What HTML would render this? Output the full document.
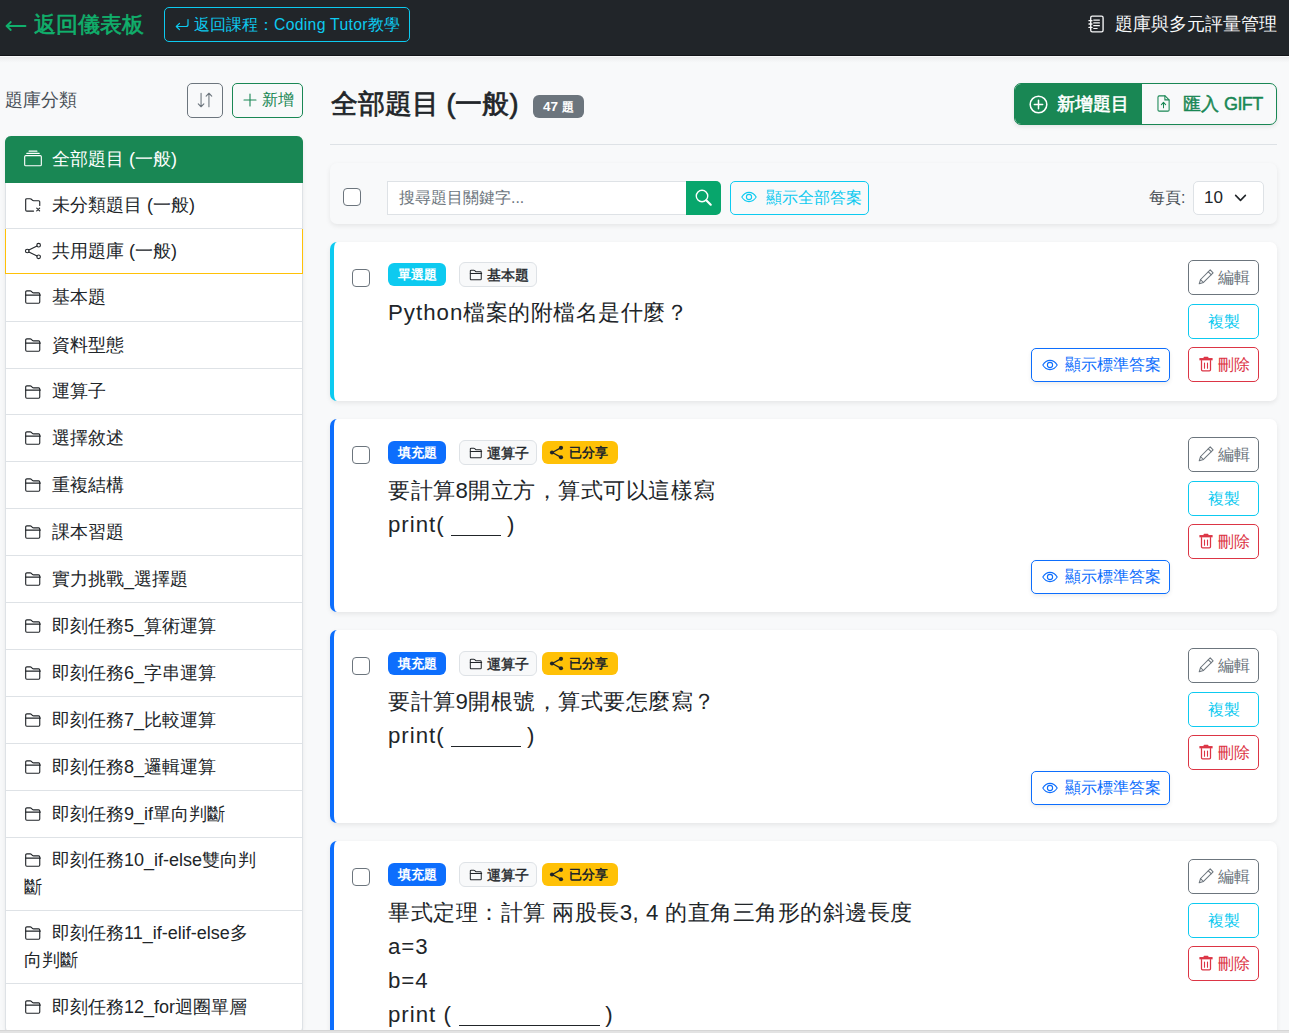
<!DOCTYPE html>
<html><head><meta charset="utf-8">
<style>
*{box-sizing:border-box}
html,body{margin:0;padding:0}
body{width:1289px;height:1033px;overflow:hidden;background:#f8f9fa;font-family:"Liberation Sans",sans-serif;color:#212529;position:relative}
svg{display:block}
.nav{position:absolute;left:0;top:0;width:1289px;height:56px;background:#212529;border-bottom:1px solid #121418}
.navshadow{position:absolute;left:0;top:57px;width:1289px;height:6px;background:linear-gradient(#ebebec,#eff0f1 30%,#f5f6f7 70%,#f8f9fa)}
.brand{position:absolute;left:34px;top:8px;font-size:21.6px;line-height:34px;font-weight:400;-webkit-text-stroke:.6px #10b06c;color:#10b06c;white-space:nowrap}
.arrow{position:absolute;left:5px;top:15px}
.backbtn{position:absolute;left:164px;top:7px;width:246px;height:35px;border:1px solid #0dcaf0;border-radius:5px;color:#0dcaf0;font-size:15.75px;line-height:33px;white-space:nowrap}
.backbtn>span{position:absolute;left:29px;top:0}
.backbtn svg{position:absolute;left:9px;top:9px}
.navtitle{position:absolute;left:1115px;top:11px;font-size:18px;line-height:27px;color:#f8f9fa;white-space:nowrap}
.journal{position:absolute;left:1087px;top:15px}
.sbhead{position:absolute;left:5px;top:87px;font-size:18px;line-height:27px;color:#495057}
.btn{position:absolute;border:1px solid;border-radius:5px;white-space:nowrap}
.lg{position:absolute;left:5px;top:136px;width:298px;background:#fff;border-radius:6px;box-shadow:0 2px 4px rgba(0,0,0,.075)}
.li{position:relative;height:47px;border:1px solid #dee2e6;border-top:0;font-size:18px;line-height:27px;padding:9px 0 0 18px;color:#212529;white-space:nowrap}
.li span{display:block;text-indent:28px}
.li.active{background:#198754;border-color:#198754;color:#fff;border-radius:6px 6px 0 0}
.li.share{border-color:#ffc107}
.li.pre{border-bottom-color:#dee2e6}
.title{position:absolute;left:331px;top:84px;font-size:27px;line-height:40px;font-weight:400;-webkit-text-stroke:.7px #212529;color:#212529;white-space:nowrap}
.badge{position:absolute;border-radius:6px;font-weight:bold;text-align:center;white-space:nowrap}
.hr{position:absolute;left:330px;top:144px;width:947px;height:1px;background:#dee2e6}
.btngrp{position:absolute;left:1014px;top:83px;width:263px;height:42px;border:1px solid #198754;border-radius:7px;overflow:hidden;box-shadow:0 2px 4px rgba(0,0,0,.08);background:#f8f9fa}
.bg1{position:absolute;left:0;top:0;width:127px;height:40px;background:#198754;color:#fff;font-size:18px;font-weight:400;-webkit-text-stroke:.6px #fff;line-height:40px}
.bg2{position:absolute;left:127px;top:0;width:135px;height:40px;color:#198754;font-size:18px;font-weight:400;-webkit-text-stroke:.45px #198754;line-height:40px}
.filter{position:absolute;left:330px;top:163px;width:947px;height:61px;background:#f8f9fa;border-radius:7px;box-shadow:0 2px 5px rgba(0,0,0,.08)}
.chk{position:absolute;width:18px;height:18px;border:1px solid #6c757d;border-radius:4px;background:#fff}
.search{position:absolute;left:57px;top:18px;width:300px;height:34px;background:#fff;border:1px solid #dee2e6;border-radius:0;font-size:15.75px;line-height:32px;color:#6c757d;padding-left:11px;white-space:nowrap}
.sbtn2{position:absolute;left:356px;top:18px;width:35px;height:34px;background:#08a66c;border-radius:0 5px 5px 0}
.sbtn2 svg{position:absolute;left:9px;top:8px}
.showall{position:absolute;left:400px;top:18px;width:139px;height:34px;border:1px solid #0dcaf0;border-radius:5px;color:#0dcaf0;font-size:15.75px;line-height:32px;white-space:nowrap}
.showall svg{position:absolute;left:10px;top:7px}
.showall span{position:absolute;left:35px}
.perpage{position:absolute;left:819px;top:21px;font-size:15.75px;line-height:27px;color:#495057;white-space:nowrap}
.select{position:absolute;left:863px;top:18px;width:71px;height:34px;background:#fff;border:1px solid #dee2e6;border-radius:5px;font-size:17px;line-height:32px;padding-left:10px;color:#212529}
.select svg{position:absolute;left:39px;top:8px}
.card{position:absolute;left:330px;width:947px;background:#fff;border-radius:7px;box-shadow:0 2px 5px rgba(0,0,0,.08);border-left:4px solid #0d6efd}
.qtext{position:absolute;left:54px;letter-spacing:.5px;font-size:22.25px;line-height:34px;color:#212529;white-space:nowrap}
.tag{position:absolute;height:23px;border-radius:6px;font-size:13px;font-weight:bold;line-height:23px;white-space:nowrap}
.tag.cat{background:#f8f9fa;border:1px solid #dee2e6;color:#212529}
.sbtn{position:absolute;left:854px;width:71px;height:35px;border:1px solid;border-radius:5px;font-size:15.75px;line-height:33px;white-space:nowrap;background:#fff}
.ansbtn{position:absolute;left:697px;width:139px;height:34px;border:1px solid #0d6efd;border-radius:5px;color:#0d6efd;font-size:15.75px;line-height:32px;white-space:nowrap;box-shadow:0 2px 4px rgba(0,0,0,.075);background:#fff}
.lat{letter-spacing:1px}
.us{display:inline-block;height:1px;background:#212529;vertical-align:-4px;margin:0 -1px 0 0}
.bottomstrip{position:absolute;left:0;top:1030px;width:1289px;height:3px;background:#e3e3e3;border-top:1px solid #d6d6d6}
</style></head>
<body>
<div class="nav">
  <div class="arrow"><svg width="22" height="22" viewBox="0 0 22 16" style="" fill="none" stroke="#10b06c" stroke-width="1.8" stroke-linecap="round" stroke-linejoin="round"><path d="M1.5 8h19M5.8 4l-4.2 4 4.2 4"/></svg></div>
  <div class="brand">返回儀表板</div>
  <div class="backbtn"><svg width="16" height="16" viewBox="0 0 16 16" style="" fill="none" stroke="#0dcaf0" stroke-width="1.2" stroke-linecap="round" stroke-linejoin="round"><path d="M14 2.5v5a2 2 0 0 1-2 2H2.5"/><path d="M5.5 6.3l-3.2 3.2 3.2 3.2"/></svg><span>返回課程：<span style="letter-spacing:.3px">Coding Tutor</span>教學</span></div>
  <div class="journal"><svg width="18" height="18" viewBox="0 0 16 16" style="" fill="none" stroke="#f8f9fa" stroke-width="1.2" stroke-linecap="round" stroke-linejoin="round"><rect x="3.3" y="1" width="11" height="14" rx="1.4"/><path d="M6 4.5h5M6 7h5M6 9.5h5M6 12h3" stroke-width="1.1"/><path d="M1.8 5h2.6M1.8 8h2.6M1.8 11h2.6" stroke-width="1.3"/></svg></div>
  <div class="navtitle">題庫與多元評量管理</div>
</div>

<div class="navshadow"></div>
<div class="sbhead">題庫分類</div>
<div class="btn" style="left:187px;top:83px;width:36px;height:35px;border-color:#6c757d"><div style="position:absolute;left:8px;top:7px"><svg width="18" height="18" viewBox="0 0 16 16" style="" fill="none" stroke="#6c757d" stroke-width="0.95" stroke-linecap="round" stroke-linejoin="round"><path d="M4.5 2v12M2 11.5l2.5 2.5 2.5-2.5M11.5 14v-12M9 4.5l2.5-2.5 2.5 2.5"/></svg></div></div>
<div class="btn" style="left:232px;top:83px;width:71px;height:35px;border-color:#198754;color:#198754;font-size:15.75px;line-height:33px"><div style="position:absolute;left:9px;top:7.5px"><svg width="16" height="16" viewBox="0 0 16 16" style="" fill="none" stroke="#198754" stroke-width="1.1" stroke-linecap="round" stroke-linejoin="round"><path d="M8 2v12M2 8h12"/></svg></div><span style="position:absolute;left:29px;top:-1px">新增</span></div>

<div class="lg"><div class="li active" style="height:47px;padding-top:9.5px"><svg width="18" height="18" viewBox="0 0 16 16" style="position:absolute;left:18px;top:14px" fill="none" stroke="#fff" stroke-width="1.0" stroke-linecap="round" stroke-linejoin="round"><rect x="0.6" y="5" width="14.8" height="9" rx="1"/><path d="M2.5 3h11M4.5 1h7"/></svg><span>全部題目 (一般)</span></div><div class="li " style="height:46px;padding-top:9.0px"><svg width="18" height="18" viewBox="0 0 16 16" style="position:absolute;left:18px;top:14px" fill="none" stroke="#212529" stroke-width="1.0" stroke-linecap="round" stroke-linejoin="round"><path d="M8.5 12.5h-6a1 1 0 0 1-1-1V2.5a1 1 0 0 1 1-1h2.9c.5 0 .9.2 1.2.5l.8.8c.3.3.7.5 1.1.5h4.5a1 1 0 0 1 1 1v3.2"/><path d="M11.3 9.8l2.6 2.6M13.9 9.8l-2.6 2.6"/></svg><span>未分類題目 (一般)</span></div><div class="li share" style="height:45px;padding-top:8.5px"><svg width="18" height="18" viewBox="0 0 16 16" style="position:absolute;left:18px;top:13px" fill="none" stroke="#212529" stroke-width="1.0" stroke-linecap="round" stroke-linejoin="round"><circle cx="13" cy="2.8" r="1.6"/><circle cx="13" cy="13.2" r="1.6"/><circle cx="2.9" cy="8" r="1.6"/><path d="M4.3 7.2l7.3-3.6M4.3 8.8l7.3 3.6"/></svg><span>共用題庫 (一般)</span></div><div class="li " style="height:48px;padding-top:10.0px"><svg width="18" height="18" viewBox="0 0 16 16" style="position:absolute;left:18px;top:14px" fill="none" stroke="#212529" stroke-width="1.0" stroke-linecap="round" stroke-linejoin="round"><path d="M1.5 12.5V3.5a1 1 0 0 1 1-1h2.9c.5 0 .9.2 1.2.5l.8.8c.3.3.7.5 1.1.5h4.5a1 1 0 0 1 1 1v7.2a1 1 0 0 1-1 1h-10.5a1 1 0 0 1-1-1z"/><path d="M1.5 6.3h13"/></svg><span>基本題</span></div><div class="li " style="height:47px;padding-top:9.5px"><svg width="18" height="18" viewBox="0 0 16 16" style="position:absolute;left:18px;top:14px" fill="none" stroke="#212529" stroke-width="1.0" stroke-linecap="round" stroke-linejoin="round"><path d="M1.5 12.5V3.5a1 1 0 0 1 1-1h2.9c.5 0 .9.2 1.2.5l.8.8c.3.3.7.5 1.1.5h4.5a1 1 0 0 1 1 1v7.2a1 1 0 0 1-1 1h-10.5a1 1 0 0 1-1-1z"/><path d="M1.5 6.3h13"/></svg><span>資料型態</span></div><div class="li " style="height:46px;padding-top:9.0px"><svg width="18" height="18" viewBox="0 0 16 16" style="position:absolute;left:18px;top:14px" fill="none" stroke="#212529" stroke-width="1.0" stroke-linecap="round" stroke-linejoin="round"><path d="M1.5 12.5V3.5a1 1 0 0 1 1-1h2.9c.5 0 .9.2 1.2.5l.8.8c.3.3.7.5 1.1.5h4.5a1 1 0 0 1 1 1v7.2a1 1 0 0 1-1 1h-10.5a1 1 0 0 1-1-1z"/><path d="M1.5 6.3h13"/></svg><span>運算子</span></div><div class="li " style="height:47px;padding-top:9.5px"><svg width="18" height="18" viewBox="0 0 16 16" style="position:absolute;left:18px;top:14px" fill="none" stroke="#212529" stroke-width="1.0" stroke-linecap="round" stroke-linejoin="round"><path d="M1.5 12.5V3.5a1 1 0 0 1 1-1h2.9c.5 0 .9.2 1.2.5l.8.8c.3.3.7.5 1.1.5h4.5a1 1 0 0 1 1 1v7.2a1 1 0 0 1-1 1h-10.5a1 1 0 0 1-1-1z"/><path d="M1.5 6.3h13"/></svg><span>選擇敘述</span></div><div class="li " style="height:47px;padding-top:9.5px"><svg width="18" height="18" viewBox="0 0 16 16" style="position:absolute;left:18px;top:14px" fill="none" stroke="#212529" stroke-width="1.0" stroke-linecap="round" stroke-linejoin="round"><path d="M1.5 12.5V3.5a1 1 0 0 1 1-1h2.9c.5 0 .9.2 1.2.5l.8.8c.3.3.7.5 1.1.5h4.5a1 1 0 0 1 1 1v7.2a1 1 0 0 1-1 1h-10.5a1 1 0 0 1-1-1z"/><path d="M1.5 6.3h13"/></svg><span>重複結構</span></div><div class="li " style="height:47px;padding-top:9.5px"><svg width="18" height="18" viewBox="0 0 16 16" style="position:absolute;left:18px;top:14px" fill="none" stroke="#212529" stroke-width="1.0" stroke-linecap="round" stroke-linejoin="round"><path d="M1.5 12.5V3.5a1 1 0 0 1 1-1h2.9c.5 0 .9.2 1.2.5l.8.8c.3.3.7.5 1.1.5h4.5a1 1 0 0 1 1 1v7.2a1 1 0 0 1-1 1h-10.5a1 1 0 0 1-1-1z"/><path d="M1.5 6.3h13"/></svg><span>課本習題</span></div><div class="li " style="height:47px;padding-top:9.5px"><svg width="18" height="18" viewBox="0 0 16 16" style="position:absolute;left:18px;top:14px" fill="none" stroke="#212529" stroke-width="1.0" stroke-linecap="round" stroke-linejoin="round"><path d="M1.5 12.5V3.5a1 1 0 0 1 1-1h2.9c.5 0 .9.2 1.2.5l.8.8c.3.3.7.5 1.1.5h4.5a1 1 0 0 1 1 1v7.2a1 1 0 0 1-1 1h-10.5a1 1 0 0 1-1-1z"/><path d="M1.5 6.3h13"/></svg><span>實力挑戰_選擇題</span></div><div class="li " style="height:47px;padding-top:9.5px"><svg width="18" height="18" viewBox="0 0 16 16" style="position:absolute;left:18px;top:14px" fill="none" stroke="#212529" stroke-width="1.0" stroke-linecap="round" stroke-linejoin="round"><path d="M1.5 12.5V3.5a1 1 0 0 1 1-1h2.9c.5 0 .9.2 1.2.5l.8.8c.3.3.7.5 1.1.5h4.5a1 1 0 0 1 1 1v7.2a1 1 0 0 1-1 1h-10.5a1 1 0 0 1-1-1z"/><path d="M1.5 6.3h13"/></svg><span>即刻任務5_算術運算</span></div><div class="li " style="height:47px;padding-top:9.5px"><svg width="18" height="18" viewBox="0 0 16 16" style="position:absolute;left:18px;top:14px" fill="none" stroke="#212529" stroke-width="1.0" stroke-linecap="round" stroke-linejoin="round"><path d="M1.5 12.5V3.5a1 1 0 0 1 1-1h2.9c.5 0 .9.2 1.2.5l.8.8c.3.3.7.5 1.1.5h4.5a1 1 0 0 1 1 1v7.2a1 1 0 0 1-1 1h-10.5a1 1 0 0 1-1-1z"/><path d="M1.5 6.3h13"/></svg><span>即刻任務6_字串運算</span></div><div class="li " style="height:47px;padding-top:9.5px"><svg width="18" height="18" viewBox="0 0 16 16" style="position:absolute;left:18px;top:14px" fill="none" stroke="#212529" stroke-width="1.0" stroke-linecap="round" stroke-linejoin="round"><path d="M1.5 12.5V3.5a1 1 0 0 1 1-1h2.9c.5 0 .9.2 1.2.5l.8.8c.3.3.7.5 1.1.5h4.5a1 1 0 0 1 1 1v7.2a1 1 0 0 1-1 1h-10.5a1 1 0 0 1-1-1z"/><path d="M1.5 6.3h13"/></svg><span>即刻任務7_比較運算</span></div><div class="li " style="height:47px;padding-top:9.5px"><svg width="18" height="18" viewBox="0 0 16 16" style="position:absolute;left:18px;top:14px" fill="none" stroke="#212529" stroke-width="1.0" stroke-linecap="round" stroke-linejoin="round"><path d="M1.5 12.5V3.5a1 1 0 0 1 1-1h2.9c.5 0 .9.2 1.2.5l.8.8c.3.3.7.5 1.1.5h4.5a1 1 0 0 1 1 1v7.2a1 1 0 0 1-1 1h-10.5a1 1 0 0 1-1-1z"/><path d="M1.5 6.3h13"/></svg><span>即刻任務8_邏輯運算</span></div><div class="li " style="height:47px;padding-top:9.5px"><svg width="18" height="18" viewBox="0 0 16 16" style="position:absolute;left:18px;top:14px" fill="none" stroke="#212529" stroke-width="1.0" stroke-linecap="round" stroke-linejoin="round"><path d="M1.5 12.5V3.5a1 1 0 0 1 1-1h2.9c.5 0 .9.2 1.2.5l.8.8c.3.3.7.5 1.1.5h4.5a1 1 0 0 1 1 1v7.2a1 1 0 0 1-1 1h-10.5a1 1 0 0 1-1-1z"/><path d="M1.5 6.3h13"/></svg><span>即刻任務9_if單向判斷</span></div><div class="li " style="height:73px;padding-top:9px"><svg width="18" height="18" viewBox="0 0 16 16" style="position:absolute;left:18px;top:13px" fill="none" stroke="#212529" stroke-width="1.0" stroke-linecap="round" stroke-linejoin="round"><path d="M1.5 12.5V3.5a1 1 0 0 1 1-1h2.9c.5 0 .9.2 1.2.5l.8.8c.3.3.7.5 1.1.5h4.5a1 1 0 0 1 1 1v7.2a1 1 0 0 1-1 1h-10.5a1 1 0 0 1-1-1z"/><path d="M1.5 6.3h13"/></svg><span>即刻任務10_if-else雙向判<br>斷</span></div><div class="li " style="height:73px;padding-top:9px"><svg width="18" height="18" viewBox="0 0 16 16" style="position:absolute;left:18px;top:13px" fill="none" stroke="#212529" stroke-width="1.0" stroke-linecap="round" stroke-linejoin="round"><path d="M1.5 12.5V3.5a1 1 0 0 1 1-1h2.9c.5 0 .9.2 1.2.5l.8.8c.3.3.7.5 1.1.5h4.5a1 1 0 0 1 1 1v7.2a1 1 0 0 1-1 1h-10.5a1 1 0 0 1-1-1z"/><path d="M1.5 6.3h13"/></svg><span>即刻任務11_if-elif-else多<br>向判斷</span></div><div class="li " style="height:47px;padding-top:9.5px"><svg width="18" height="18" viewBox="0 0 16 16" style="position:absolute;left:18px;top:14px" fill="none" stroke="#212529" stroke-width="1.0" stroke-linecap="round" stroke-linejoin="round"><path d="M1.5 12.5V3.5a1 1 0 0 1 1-1h2.9c.5 0 .9.2 1.2.5l.8.8c.3.3.7.5 1.1.5h4.5a1 1 0 0 1 1 1v7.2a1 1 0 0 1-1 1h-10.5a1 1 0 0 1-1-1z"/><path d="M1.5 6.3h13"/></svg><span>即刻任務12_for迴圈單層</span></div></div>

<div class="title">全部題目 (一般)</div>
<div class="badge" style="left:533px;top:95px;width:51px;height:23px;background:#6c757d;color:#fff;font-size:13.5px;line-height:24px">47 <span style="font-size:12px">題</span></div>
<div class="hr"></div>

<div class="btngrp">
  <div class="bg1"><div style="position:absolute;left:14px;top:11px"><svg width="19" height="19" viewBox="0 0 16 16" style="" fill="none" stroke="#fff" stroke-width="1.3" stroke-linecap="round" stroke-linejoin="round"><circle cx="8" cy="8" r="7"/><path d="M8 4.5v7M4.5 8h7"/></svg></div><span style="position:absolute;left:42px">新增題目</span></div>
  <div class="bg2"><div style="position:absolute;left:13px;top:11px"><svg width="17" height="17" viewBox="0 0 16 16" style="" fill="none" stroke="#198754" stroke-width="1" stroke-linecap="round" stroke-linejoin="round"><path d="M4 0.8h5.5l3.8 3.8V14a1.2 1.2 0 0 1-1.2 1.2H4A1.2 1.2 0 0 1 2.8 14V2A1.2 1.2 0 0 1 4 .8z"/><path d="M9.3 .8v3.8h3.8" /><path d="M8 12V7.2M6 9l2-2 2 2"/></svg></div><span style="position:absolute;left:41px">匯入 <span style="letter-spacing:-.6px">GIFT</span></span></div>
</div>

<div class="filter">
  <div class="chk" style="left:13px;top:25px"></div>
  <div class="search">搜尋題目關鍵字...</div>
  <div class="sbtn2"><svg width="17" height="17" viewBox="0 0 16 16" style="" fill="none" stroke="#fff" stroke-width="1.3" stroke-linecap="round" stroke-linejoin="round"><circle cx="6.6" cy="6.6" r="5.4"/><path d="M10.6 10.6l4.2 4.2" stroke-width="2"/></svg></div>
  <div class="showall"><svg width="16" height="16" viewBox="0 0 16 16" style="" fill="none" stroke="#0dcaf0" stroke-width="1.1" stroke-linecap="round" stroke-linejoin="round"><path d="M0.8 8c1.8-2.9 4.3-4.6 7.2-4.6s5.4 1.7 7.2 4.6c-1.8 2.9-4.3 4.6-7.2 4.6S2.6 10.9.8 8z"/><circle cx="8" cy="8" r="2.6"/></svg><span>顯示全部答案</span></div>
  <div class="perpage">每頁:</div>
  <div class="select">10<svg width="15" height="15" viewBox="0 0 16 16" style="" fill="none" stroke="#212529" stroke-width="1.7" stroke-linecap="round" stroke-linejoin="round"><path d="M2.8 5.8l5.2 5.2 5.2-5.2"/></svg></div>
</div>

<div class="card" style="top:242px;height:159px;border-left-color:#0dcaf0"><div class="chk" style="left:18px;top:27px"></div><div class="tag" style="left:54px;top:21px;width:58px;background:#0dcaf0;color:#fff;text-align:center">單選題</div><div class="tag cat" style="left:125px;top:20px;width:78px;height:25px;line-height:23px"><svg width="14" height="14" viewBox="0 0 16 16" style="position:absolute;left:9px;top:4.5px" fill="none" stroke="#212529" stroke-width="1.15" stroke-linecap="round" stroke-linejoin="round"><path d="M1.5 12.5V3.5a1 1 0 0 1 1-1h2.9c.5 0 .9.2 1.2.5l.8.8c.3.3.7.5 1.1.5h4.5a1 1 0 0 1 1 1v7.2a1 1 0 0 1-1 1h-10.5a1 1 0 0 1-1-1z"/><path d="M1.5 6.3h13"/></svg><span style="position:absolute;left:27px;top:1px;font-weight:400;-webkit-text-stroke:.4px #212529;font-size:13.5px">基本題</span></div><div class="qtext" style="top:54px"><span class="lat">Python</span>檔案的附檔名是什麼？</div><div class="ansbtn" style="top:106px"><svg width="16" height="16" viewBox="0 0 16 16" style="position:absolute;left:10px;top:8px" fill="none" stroke="#0d6efd" stroke-width="1.1" stroke-linecap="round" stroke-linejoin="round"><path d="M0.8 8c1.8-2.9 4.3-4.6 7.2-4.6s5.4 1.7 7.2 4.6c-1.8 2.9-4.3 4.6-7.2 4.6S2.6 10.9.8 8z"/><circle cx="8" cy="8" r="2.6"/></svg><span style="position:absolute;left:33px">顯示標準答案</span></div><div class="sbtn" style="top:18px;border-color:#6c757d;color:#6c757d"><svg width="16" height="16" viewBox="0 0 16 16" style="position:absolute;left:9px;top:8px" fill="none" stroke="#6c757d" stroke-width="1.05" stroke-linecap="round" stroke-linejoin="round"><path d="M12.2 0.9l2.9 2.9-9.6 9.6-4.3 1.4 1.4-4.3z"/><path d="M10.3 2.8l2.9 2.9M2.5 10.6l2.9 2.9"/></svg><span style="position:absolute;left:29px">編輯</span></div><div class="sbtn" style="top:62px;border-color:#0dcaf0;color:#0dcaf0;text-align:center">複製</div><div class="sbtn" style="top:105px;border-color:#dc3545;color:#dc3545"><svg width="16" height="16" viewBox="0 0 16 16" style="position:absolute;left:9px;top:7.5px" fill="none" stroke="#dc3545" stroke-width="1" stroke-linecap="round" stroke-linejoin="round"><path d="M1.4 3.2h13.2" stroke-width="2.3" stroke-linecap="butt"/><path d="M6.3 1.6h3.4" stroke-width="1.6"/><path d="M3.5 4.6v9.2c0 .6.5 1.1 1.1 1.1h6.8c.6 0 1.1-.5 1.1-1.1V4.6" stroke-width="1.25"/><path d="M6.5 7v5.3M9.5 7v5.3" stroke-width="1.1"/></svg><span style="position:absolute;left:29px">刪除</span></div></div><div class="card" style="top:419px;height:193px;border-left-color:#0d6efd"><div class="chk" style="left:18px;top:27px"></div><div class="tag" style="left:54px;top:22px;width:58px;background:#0d6efd;color:#fff;text-align:center">填充題</div><div class="tag cat" style="left:125px;top:21px;width:78px;height:25px;line-height:23px"><svg width="14" height="14" viewBox="0 0 16 16" style="position:absolute;left:9px;top:4.5px" fill="none" stroke="#212529" stroke-width="1.15" stroke-linecap="round" stroke-linejoin="round"><path d="M1.5 12.5V3.5a1 1 0 0 1 1-1h2.9c.5 0 .9.2 1.2.5l.8.8c.3.3.7.5 1.1.5h4.5a1 1 0 0 1 1 1v7.2a1 1 0 0 1-1 1h-10.5a1 1 0 0 1-1-1z"/><path d="M1.5 6.3h13"/></svg><span style="position:absolute;left:27px;top:1px;font-weight:400;-webkit-text-stroke:.4px #212529;font-size:13.5px">運算子</span></div><div class="tag" style="left:208px;top:22px;width:76px;background:#ffc107;color:#212529"><svg width="15" height="15" viewBox="0 0 16 16" style="position:absolute;left:7px;top:4px" fill="none" stroke="#212529" stroke-width="1" stroke-linecap="round" stroke-linejoin="round"><circle cx="12.8" cy="3" r="2.2" fill="#212529" stroke="none"/><circle cx="12.8" cy="13" r="2.2" fill="#212529" stroke="none"/><circle cx="3.2" cy="8" r="2.2" fill="#212529" stroke="none"/><path d="M3.5 8l9-5M3.5 8l9 5" stroke-width="1.4"/></svg><span style="position:absolute;left:27px">已分享</span></div><div class="qtext" style="top:55px">要計算8開立方，算式可以這樣寫</div><div class="qtext" style="top:89px"><span class="lat">print(</span> <span class="us" style="width:50px"></span> )</div><div class="ansbtn" style="top:141px"><svg width="16" height="16" viewBox="0 0 16 16" style="position:absolute;left:10px;top:8px" fill="none" stroke="#0d6efd" stroke-width="1.1" stroke-linecap="round" stroke-linejoin="round"><path d="M0.8 8c1.8-2.9 4.3-4.6 7.2-4.6s5.4 1.7 7.2 4.6c-1.8 2.9-4.3 4.6-7.2 4.6S2.6 10.9.8 8z"/><circle cx="8" cy="8" r="2.6"/></svg><span style="position:absolute;left:33px">顯示標準答案</span></div><div class="sbtn" style="top:18px;border-color:#6c757d;color:#6c757d"><svg width="16" height="16" viewBox="0 0 16 16" style="position:absolute;left:9px;top:8px" fill="none" stroke="#6c757d" stroke-width="1.05" stroke-linecap="round" stroke-linejoin="round"><path d="M12.2 0.9l2.9 2.9-9.6 9.6-4.3 1.4 1.4-4.3z"/><path d="M10.3 2.8l2.9 2.9M2.5 10.6l2.9 2.9"/></svg><span style="position:absolute;left:29px">編輯</span></div><div class="sbtn" style="top:62px;border-color:#0dcaf0;color:#0dcaf0;text-align:center">複製</div><div class="sbtn" style="top:105px;border-color:#dc3545;color:#dc3545"><svg width="16" height="16" viewBox="0 0 16 16" style="position:absolute;left:9px;top:7.5px" fill="none" stroke="#dc3545" stroke-width="1" stroke-linecap="round" stroke-linejoin="round"><path d="M1.4 3.2h13.2" stroke-width="2.3" stroke-linecap="butt"/><path d="M6.3 1.6h3.4" stroke-width="1.6"/><path d="M3.5 4.6v9.2c0 .6.5 1.1 1.1 1.1h6.8c.6 0 1.1-.5 1.1-1.1V4.6" stroke-width="1.25"/><path d="M6.5 7v5.3M9.5 7v5.3" stroke-width="1.1"/></svg><span style="position:absolute;left:29px">刪除</span></div></div><div class="card" style="top:630px;height:193px;border-left-color:#0d6efd"><div class="chk" style="left:18px;top:27px"></div><div class="tag" style="left:54px;top:22px;width:58px;background:#0d6efd;color:#fff;text-align:center">填充題</div><div class="tag cat" style="left:125px;top:21px;width:78px;height:25px;line-height:23px"><svg width="14" height="14" viewBox="0 0 16 16" style="position:absolute;left:9px;top:4.5px" fill="none" stroke="#212529" stroke-width="1.15" stroke-linecap="round" stroke-linejoin="round"><path d="M1.5 12.5V3.5a1 1 0 0 1 1-1h2.9c.5 0 .9.2 1.2.5l.8.8c.3.3.7.5 1.1.5h4.5a1 1 0 0 1 1 1v7.2a1 1 0 0 1-1 1h-10.5a1 1 0 0 1-1-1z"/><path d="M1.5 6.3h13"/></svg><span style="position:absolute;left:27px;top:1px;font-weight:400;-webkit-text-stroke:.4px #212529;font-size:13.5px">運算子</span></div><div class="tag" style="left:208px;top:22px;width:76px;background:#ffc107;color:#212529"><svg width="15" height="15" viewBox="0 0 16 16" style="position:absolute;left:7px;top:4px" fill="none" stroke="#212529" stroke-width="1" stroke-linecap="round" stroke-linejoin="round"><circle cx="12.8" cy="3" r="2.2" fill="#212529" stroke="none"/><circle cx="12.8" cy="13" r="2.2" fill="#212529" stroke="none"/><circle cx="3.2" cy="8" r="2.2" fill="#212529" stroke="none"/><path d="M3.5 8l9-5M3.5 8l9 5" stroke-width="1.4"/></svg><span style="position:absolute;left:27px">已分享</span></div><div class="qtext" style="top:55px">要計算9開根號，算式要怎麼寫？</div><div class="qtext" style="top:89px"><span class="lat">print(</span> <span class="us" style="width:70px"></span> )</div><div class="ansbtn" style="top:141px"><svg width="16" height="16" viewBox="0 0 16 16" style="position:absolute;left:10px;top:8px" fill="none" stroke="#0d6efd" stroke-width="1.1" stroke-linecap="round" stroke-linejoin="round"><path d="M0.8 8c1.8-2.9 4.3-4.6 7.2-4.6s5.4 1.7 7.2 4.6c-1.8 2.9-4.3 4.6-7.2 4.6S2.6 10.9.8 8z"/><circle cx="8" cy="8" r="2.6"/></svg><span style="position:absolute;left:33px">顯示標準答案</span></div><div class="sbtn" style="top:18px;border-color:#6c757d;color:#6c757d"><svg width="16" height="16" viewBox="0 0 16 16" style="position:absolute;left:9px;top:8px" fill="none" stroke="#6c757d" stroke-width="1.05" stroke-linecap="round" stroke-linejoin="round"><path d="M12.2 0.9l2.9 2.9-9.6 9.6-4.3 1.4 1.4-4.3z"/><path d="M10.3 2.8l2.9 2.9M2.5 10.6l2.9 2.9"/></svg><span style="position:absolute;left:29px">編輯</span></div><div class="sbtn" style="top:62px;border-color:#0dcaf0;color:#0dcaf0;text-align:center">複製</div><div class="sbtn" style="top:105px;border-color:#dc3545;color:#dc3545"><svg width="16" height="16" viewBox="0 0 16 16" style="position:absolute;left:9px;top:7.5px" fill="none" stroke="#dc3545" stroke-width="1" stroke-linecap="round" stroke-linejoin="round"><path d="M1.4 3.2h13.2" stroke-width="2.3" stroke-linecap="butt"/><path d="M6.3 1.6h3.4" stroke-width="1.6"/><path d="M3.5 4.6v9.2c0 .6.5 1.1 1.1 1.1h6.8c.6 0 1.1-.5 1.1-1.1V4.6" stroke-width="1.25"/><path d="M6.5 7v5.3M9.5 7v5.3" stroke-width="1.1"/></svg><span style="position:absolute;left:29px">刪除</span></div></div><div class="card" style="top:841px;height:260px;border-left-color:#0d6efd"><div class="chk" style="left:18px;top:27px"></div><div class="tag" style="left:54px;top:22px;width:58px;background:#0d6efd;color:#fff;text-align:center">填充題</div><div class="tag cat" style="left:125px;top:21px;width:78px;height:25px;line-height:23px"><svg width="14" height="14" viewBox="0 0 16 16" style="position:absolute;left:9px;top:4.5px" fill="none" stroke="#212529" stroke-width="1.15" stroke-linecap="round" stroke-linejoin="round"><path d="M1.5 12.5V3.5a1 1 0 0 1 1-1h2.9c.5 0 .9.2 1.2.5l.8.8c.3.3.7.5 1.1.5h4.5a1 1 0 0 1 1 1v7.2a1 1 0 0 1-1 1h-10.5a1 1 0 0 1-1-1z"/><path d="M1.5 6.3h13"/></svg><span style="position:absolute;left:27px;top:1px;font-weight:400;-webkit-text-stroke:.4px #212529;font-size:13.5px">運算子</span></div><div class="tag" style="left:208px;top:22px;width:76px;background:#ffc107;color:#212529"><svg width="15" height="15" viewBox="0 0 16 16" style="position:absolute;left:7px;top:4px" fill="none" stroke="#212529" stroke-width="1" stroke-linecap="round" stroke-linejoin="round"><circle cx="12.8" cy="3" r="2.2" fill="#212529" stroke="none"/><circle cx="12.8" cy="13" r="2.2" fill="#212529" stroke="none"/><circle cx="3.2" cy="8" r="2.2" fill="#212529" stroke="none"/><path d="M3.5 8l9-5M3.5 8l9 5" stroke-width="1.4"/></svg><span style="position:absolute;left:27px">已分享</span></div><div class="qtext" style="top:55px">畢式定理：計算 兩股長3, 4 的直角三角形的斜邊長度</div><div class="qtext" style="top:89px"><span class="lat">a=3</span></div><div class="qtext" style="top:123px"><span class="lat">b=4</span></div><div class="qtext" style="top:157px"><span class="lat">print (</span> <span class="us" style="width:141px"></span> )</div><div class="sbtn" style="top:18px;border-color:#6c757d;color:#6c757d"><svg width="16" height="16" viewBox="0 0 16 16" style="position:absolute;left:9px;top:8px" fill="none" stroke="#6c757d" stroke-width="1.05" stroke-linecap="round" stroke-linejoin="round"><path d="M12.2 0.9l2.9 2.9-9.6 9.6-4.3 1.4 1.4-4.3z"/><path d="M10.3 2.8l2.9 2.9M2.5 10.6l2.9 2.9"/></svg><span style="position:absolute;left:29px">編輯</span></div><div class="sbtn" style="top:62px;border-color:#0dcaf0;color:#0dcaf0;text-align:center">複製</div><div class="sbtn" style="top:105px;border-color:#dc3545;color:#dc3545"><svg width="16" height="16" viewBox="0 0 16 16" style="position:absolute;left:9px;top:7.5px" fill="none" stroke="#dc3545" stroke-width="1" stroke-linecap="round" stroke-linejoin="round"><path d="M1.4 3.2h13.2" stroke-width="2.3" stroke-linecap="butt"/><path d="M6.3 1.6h3.4" stroke-width="1.6"/><path d="M3.5 4.6v9.2c0 .6.5 1.1 1.1 1.1h6.8c.6 0 1.1-.5 1.1-1.1V4.6" stroke-width="1.25"/><path d="M6.5 7v5.3M9.5 7v5.3" stroke-width="1.1"/></svg><span style="position:absolute;left:29px">刪除</span></div></div>

<div class="bottomstrip"></div>
</body></html>
